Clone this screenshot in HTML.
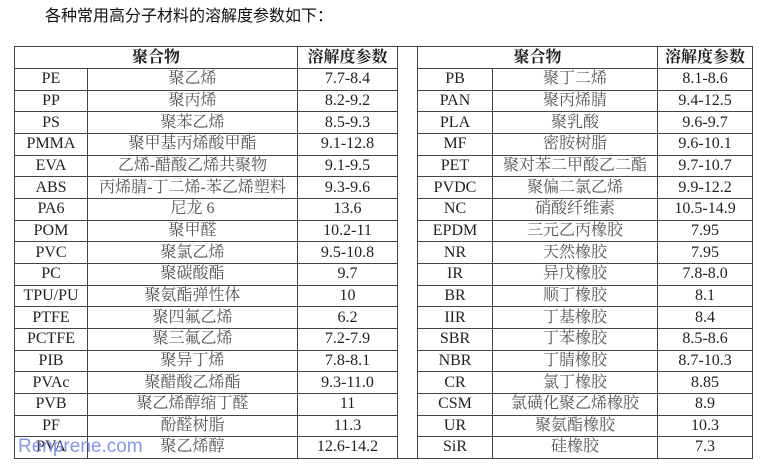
<!DOCTYPE html><html><head><meta charset="utf-8"><style>
body{margin:0;width:777px;height:471px;background:#fff;position:relative;overflow:hidden}
.t{position:absolute;left:45px;top:2px;font:16px "Liberation Sans","Noto Sans CJK SC",sans-serif;color:#111}
table{position:absolute;left:14px;top:46px;border-collapse:collapse;table-layout:fixed;width:738px;font:16px "Liberation Serif","Noto Serif CJK SC",serif;color:#222}
td{border:1px solid #444;height:20.67px;padding:0;text-align:center;line-height:18px;white-space:nowrap;overflow:hidden}
td.c{color:#555}
tr.h td{font-weight:bold;height:21px}
.w{position:absolute;left:18px;top:436px;font:19px "Liberation Sans",sans-serif;color:#6f86e8;opacity:.85}
</style></head><body>
<div class="t">各种常用高分子材料的溶解度参数如下：</div>
<table>
<colgroup><col style="width:73px"><col style="width:210px"><col style="width:100px"><col style="width:20px"><col style="width:75px"><col style="width:165px"><col style="width:95px"></colgroup>
<tr class="h"><td colspan="2">聚合物</td><td>溶解度参数</td><td rowspan="19"></td><td colspan="2">聚合物</td><td>溶解度参数</td></tr>
<tr><td>PE</td><td class="c">聚乙烯</td><td>7.7-8.4</td><td>PB</td><td class="c">聚丁二烯</td><td>8.1-8.6</td></tr>
<tr><td>PP</td><td class="c">聚丙烯</td><td>8.2-9.2</td><td>PAN</td><td class="c">聚丙烯腈</td><td>9.4-12.5</td></tr>
<tr><td>PS</td><td class="c">聚苯乙烯</td><td>8.5-9.3</td><td>PLA</td><td class="c">聚乳酸</td><td>9.6-9.7</td></tr>
<tr><td>PMMA</td><td class="c">聚甲基丙烯酸甲酯</td><td>9.1-12.8</td><td>MF</td><td class="c">密胺树脂</td><td>9.6-10.1</td></tr>
<tr><td>EVA</td><td class="c">乙烯-醋酸乙烯共聚物</td><td>9.1-9.5</td><td>PET</td><td class="c">聚对苯二甲酸乙二酯</td><td>9.7-10.7</td></tr>
<tr><td>ABS</td><td class="c">丙烯腈-丁二烯-苯乙烯塑料</td><td>9.3-9.6</td><td>PVDC</td><td class="c">聚偏二氯乙烯</td><td>9.9-12.2</td></tr>
<tr><td>PA6</td><td class="c">尼龙 6</td><td>13.6</td><td>NC</td><td class="c">硝酸纤维素</td><td>10.5-14.9</td></tr>
<tr><td>POM</td><td class="c">聚甲醛</td><td>10.2-11</td><td>EPDM</td><td class="c">三元乙丙橡胶</td><td>7.95</td></tr>
<tr><td>PVC</td><td class="c">聚氯乙烯</td><td>9.5-10.8</td><td>NR</td><td class="c">天然橡胶</td><td>7.95</td></tr>
<tr><td>PC</td><td class="c">聚碳酸酯</td><td>9.7</td><td>IR</td><td class="c">异戊橡胶</td><td>7.8-8.0</td></tr>
<tr><td>TPU/PU</td><td class="c">聚氨酯弹性体</td><td>10</td><td>BR</td><td class="c">顺丁橡胶</td><td>8.1</td></tr>
<tr><td>PTFE</td><td class="c">聚四氟乙烯</td><td>6.2</td><td>IIR</td><td class="c">丁基橡胶</td><td>8.4</td></tr>
<tr><td>PCTFE</td><td class="c">聚三氟乙烯</td><td>7.2-7.9</td><td>SBR</td><td class="c">丁苯橡胶</td><td>8.5-8.6</td></tr>
<tr><td>PIB</td><td class="c">聚异丁烯</td><td>7.8-8.1</td><td>NBR</td><td class="c">丁腈橡胶</td><td>8.7-10.3</td></tr>
<tr><td>PVAc</td><td class="c">聚醋酸乙烯酯</td><td>9.3-11.0</td><td>CR</td><td class="c">氯丁橡胶</td><td>8.85</td></tr>
<tr><td>PVB</td><td class="c">聚乙烯醇缩丁醛</td><td>11</td><td>CSM</td><td class="c">氯磺化聚乙烯橡胶</td><td>8.9</td></tr>
<tr><td>PF</td><td class="c">酚醛树脂</td><td>11.3</td><td>UR</td><td class="c">聚氨酯橡胶</td><td>10.3</td></tr>
<tr><td>PVA</td><td class="c">聚乙烯醇</td><td>12.6-14.2</td><td>SiR</td><td class="c">硅橡胶</td><td>7.3</td></tr>
</table>
<div class="w">Renprene.com</div>
</body></html>
